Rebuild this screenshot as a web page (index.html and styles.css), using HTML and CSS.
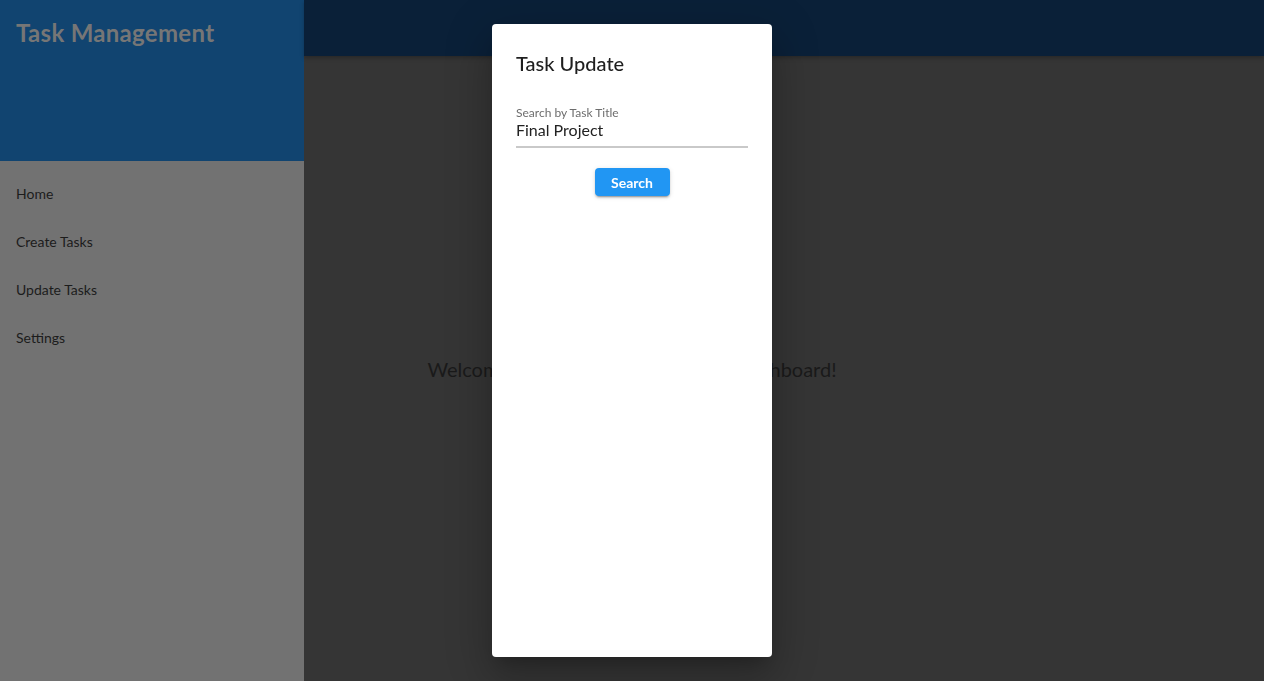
FILE: index.html
```html
<!DOCTYPE html>
<html>
<head>
<meta charset="utf-8">
<link rel="stylesheet" href="styles.css">
</head>
<body>
<div class="app">
  <aside class="drawer">
    <div class="drawer-head">
      <h1 class="brand">Task Management</h1>
    </div>
    <nav class="nav">
      <div class="nav-item">Home</div>
      <div class="nav-item">Create Tasks</div>
      <div class="nav-item">Update Tasks</div>
      <div class="nav-item">Settings</div>
    </nav>
  </aside>
  <div class="main-col">
    <header class="topbar"></header>
    <main class="content"></main>
  </div>
  <div class="welcome">Welcome to the Task Management Dashboard!</div>
</div>
<div class="dialog-wrap">
  <div class="dialog">
    <h2 class="dialog-title">Task Update</h2>
    <div class="field">
      <label class="field-label">Search by Task Title</label>
      <div class="field-value">Final Project</div>
    </div>
    <div class="actions">
      <button class="btn">Search</button>
    </div>
  </div>
</div>
</body>
</html>
```
FILE: styles.css
```css
* { box-sizing: border-box; }
html, body { margin: 0; height: 100%; }
body {
  font-family: Lato, "Open Sans", sans-serif;
  overflow: hidden;
  background: #353535;
}
.app {
  display: flex;
  height: 681px;
  position: relative;
}
.drawer {
  width: 304px;
  flex: none;
  background: #727272;
  display: flex;
  flex-direction: column;
}
.drawer-head {
  height: 161px;
  background: #114470;
  padding: 18px 16px 0;
}
.brand {
  margin: 0;
  font-size: 24px;
  font-weight: 700;
  color: #767676;
  line-height: 30px;
  letter-spacing: 0.3px;
}
.nav { padding: 8px 0; }
.nav-item {
  height: 48px;
  display: flex;
  align-items: center;
  padding: 0 16px;
  font-size: 14px;
  color: #1c1c1c;
}
.main-col {
  flex: 1;
  display: flex;
  flex-direction: column;
}
.topbar {
  height: 56px;
  background: #0a2038;
  box-shadow: 0 2px 4px rgba(0,0,0,0.25);
  position: relative;
  z-index: 1;
}
.content { flex: 1; background: #353535; }
.welcome {
  position: absolute;
  left: 0; right: 0;
  top: 355px;
  text-align: center;
  font-size: 20px;
  color: #1a1a1a;
  line-height: 28px;
}
.dialog-wrap {
  position: fixed;
  inset: 0;
  z-index: 10;
  display: flex;
  justify-content: center;
  align-items: flex-start;
  padding-top: 24px;
}
.dialog {
  width: 280px;
  height: 633px;
  background: #fff;
  border-radius: 4px;
  box-shadow: 0 11px 15px -7px rgba(0,0,0,.2), 0 24px 38px 3px rgba(0,0,0,.14), 0 9px 46px 8px rgba(0,0,0,.12);
  padding: 0 24px;
}
.dialog-title {
  margin: 0;
  padding-top: 27px;
  font-size: 20px;
  font-weight: 500;
  color: #1f1f1f;
  line-height: 24px;
}
.field {
  margin-top: 31px;
  border-bottom: 2px solid #c9c9c9;
  padding-bottom: 6px;
}
.field-label {
  display: block;
  font-size: 12px;
  color: #6d6d6d;
  line-height: 14px;
}
.field-value {
  font-size: 16px;
  color: #222;
  line-height: 20px;
}
.actions {
  display: flex;
  justify-content: center;
  margin-top: 20px;
}
.btn {
  width: 75px;
  height: 28px;
  border: 0;
  border-radius: 4px;
  background: #2196f3;
  color: #fff;
  font-family: inherit;
  font-size: 14px;
  font-weight: 700;
  box-shadow: 0 3px 1px -2px rgba(0,0,0,.2), 0 2px 2px 0 rgba(0,0,0,.14), 0 1px 5px 0 rgba(0,0,0,.12);
  padding: 0;
}
```
